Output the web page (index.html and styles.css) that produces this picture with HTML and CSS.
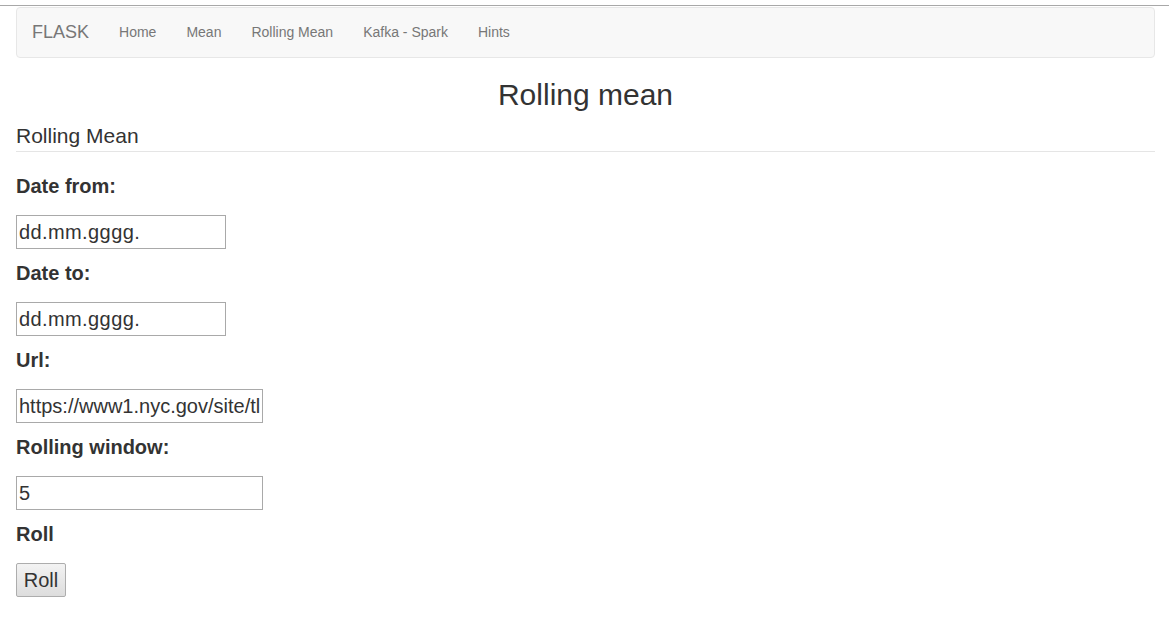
FILE: index.html
```html
<!DOCTYPE html>
<html>
<head>
<meta charset="utf-8">
<title>Rolling mean</title>
<link rel="stylesheet" href="styles.css">
</head>
<body>
<div class="frame-line"></div>
<div class="page">
  <nav class="navbar">
    <a class="brand" href="#">FLASK</a>
    <ul class="nav-links">
      <li><a href="#">Home</a></li>
      <li><a href="#">Mean</a></li>
      <li><a href="#">Rolling Mean</a></li>
      <li><a href="#">Kafka - Spark</a></li>
      <li><a href="#">Hints</a></li>
    </ul>
  </nav>
  <h2 class="title">Rolling mean</h2>
  <form class="form">
    <div class="legend">Rolling Mean</div>
    <label class="lbl first" for="df">Date from:</label>
    <input class="field date" id="df" type="text" value="dd.mm.gggg.">
    <label class="lbl" for="dt">Date to:</label>
    <input class="field date" id="dt" type="text" value="dd.mm.gggg.">
    <label class="lbl" for="url">Url:</label>
    <input class="field wide" id="url" type="text" value="https://www1.nyc.gov/site/tlc/about/tlc-trip-record-data.page">
    <label class="lbl" for="win">Rolling window:</label>
    <input class="field wide" id="win" type="text" value="5">
    <label class="lbl">Roll</label>
    <button class="btn" type="button">Roll</button>
  </form>
</div>
</body>
</html>
```
FILE: styles.css
```css
html, body {
  margin: 0;
  padding: 0;
  background: #fff;
}
body {
  font-family: "Liberation Sans", Arial, Helvetica, sans-serif;
  font-size: 14px;
  color: #333;
  padding-top: 5px;
}
.frame-line {
  height: 0;
  border-top: 1px solid #a8a8a8;
}
.page {
  padding: 0 14px 0 16px;
}
.navbar {
  box-sizing: border-box;
  margin-top: 1px;
  height: 51px;
  padding-bottom: 2px;
  background: #f8f8f8;
  border: 1px solid #e7e7e7;
  border-radius: 4px;
  display: flex;
  align-items: center;
}
.brand {
  font-size: 18px;
  color: #777;
  text-decoration: none;
  padding: 0 15px;
  line-height: 20px;
}
.nav-links {
  list-style: none;
  margin: 0;
  padding: 0;
  display: flex;
}
.nav-links a {
  display: block;
  padding: 0 15px;
  line-height: 20px;
  font-size: 14px;
  color: #777;
  text-decoration: none;
}
.title {
  margin: 20px 0 10px;
  font-size: 30px;
  font-weight: 500;
  line-height: 33px;
  text-align: center;
  color: #333;
}
.form {
  display: flex;
  flex-direction: column;
  align-items: flex-start;
}
.legend {
  align-self: stretch;
  font-size: 21px;
  line-height: 30px;
  color: #333;
  border-bottom: 1px solid #e5e5e5;
  margin-bottom: 20px;
}
.lbl {
  font-size: 20px;
  font-weight: bold;
  line-height: 28px;
  margin: 10px 0 15px;
  color: #333;
}
.lbl.first {
  margin-top: 0;
}
.field {
  box-sizing: border-box;
  height: 34px;
  border: 1px solid #a9a9a9;
  padding: 0 2px;
  font-family: "Liberation Sans", Arial, sans-serif;
  font-size: 20px;
  color: #333;
  background: #fff;
  outline: none;
}
.field.date {
  width: 210px;
  letter-spacing: 0.4px;
}
.field.wide {
  width: 247px;
}
.btn {
  box-sizing: border-box;
  width: 50px;
  height: 34px;
  padding: 0 6px;
  font-family: "Liberation Sans", Arial, sans-serif;
  font-size: 20px;
  color: #333;
  background: linear-gradient(#f3f3f3, #dddddd);
  border: 1px solid #adadad;
  border-radius: 2px;
}
```
